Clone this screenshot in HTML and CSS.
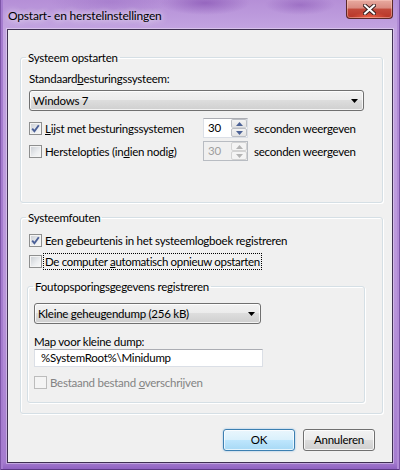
FILE: index.html
```html
<!DOCTYPE html>
<html>
<head>
<meta charset="utf-8">
<link rel="stylesheet" href="styles.css">
</head>
<body>
<div class="window">
  <div class="titlebar">
    <span class="title">Opstart- en herstelinstellingen</span>
    <div class="close">
      <svg width="13" height="11" viewBox="0 0 13 11"><path d="M2 1.5 L11 9.5 M11 1.5 L2 9.5" stroke="#3b2020" stroke-width="4" stroke-linecap="square"/><path d="M2 1.5 L11 9.5 M11 1.5 L2 9.5" stroke="#fff" stroke-width="2" stroke-linecap="square"/></svg>
    </div>
  </div>
  <div class="client">
    <fieldset class="group g1">
      <legend>Systeem opstarten</legend>
      <div class="gbody g1body">
        <div class="label">Standaard<u>b</u>esturingssysteem:</div>
        <div class="combo combo-os"><span>Windows 7</span><svg width="7" height="4" viewBox="0 0 7 4"><path d="M0 0H7L3.5 4Z" fill="#000"/></svg></div>
        <div class="spinrow first">
          <div class="check"><span class="box checked"><svg width="11" height="11" viewBox="0 0 11 11"><path d="M2.2 5.6 L4.4 8.2 L8.8 2.2" fill="none" stroke="#4a5f97" stroke-width="1.9"/></svg></span><span class="txt"><u>L</u>ijst met besturingssystemen</span></div>
          <div class="spin"><span class="val">30</span><span class="btns"><span class="up"><svg width="7" height="4" viewBox="0 0 7 4"><path d="M0 4L3.5 0L7 4Z" fill="#4c6296"/></svg></span><span class="dn"><svg width="7" height="4" viewBox="0 0 7 4"><path d="M0 0H7L3.5 4Z" fill="#4c6296"/></svg></span></span></div>
          <span class="unit">seconden weergeven</span>
        </div>
        <div class="spinrow second">
          <div class="check"><span class="box"></span><span class="txt">Herstelopties (in<u>d</u>ien nodig)</span></div>
          <div class="spin disabled"><span class="val">30</span><span class="btns"><span class="up"><svg width="7" height="4" viewBox="0 0 7 4"><path d="M0 4L3.5 0L7 4Z" fill="#b4b4b4"/></svg></span><span class="dn"><svg width="7" height="4" viewBox="0 0 7 4"><path d="M0 0H7L3.5 4Z" fill="#b4b4b4"/></svg></span></span></div>
          <span class="unit">seconden weergeven</span>
        </div>
      </div>
    </fieldset>

    <fieldset class="group g2">
      <legend>Systeemfouten</legend>
      <div class="gbody g2body">
        <div class="check"><span class="box checked"><svg width="11" height="11" viewBox="0 0 11 11"><path d="M2.2 5.6 L4.4 8.2 L8.8 2.2" fill="none" stroke="#4a5f97" stroke-width="1.9"/></svg></span><span class="txt">Een <u>g</u>ebeurtenis in het systeemlogboek registreren</span></div>
        <div class="check second-check"><span class="box"></span><span class="txt focus">De computer <u>a</u>utomatisch opnieuw opstarten</span></div>
        <fieldset class="group inner">
          <legend>Foutopsporingsgegevens registreren</legend>
          <div class="gbody innerbody">
            <div class="combo combo-dump"><span>Kleine geheugendump (256 kB)</span><svg width="7" height="4" viewBox="0 0 7 4"><path d="M0 0H7L3.5 4Z" fill="#000"/></svg></div>
            <div class="label maplabel">Map voor kleine dump:</div>
            <div class="textbox">%SystemRoot%\Minidump</div>
            <div class="check disabled overwrite"><span class="box"></span><span class="txt">Bestaand bestand <u>o</u>verschrijven</span></div>
          </div>
        </fieldset>
      </div>
    </fieldset>

    <div class="buttons">
      <div class="btn default">OK</div>
      <div class="btn">Annuleren</div>
    </div>
  </div>
</div>
</body>
</html>
```
FILE: styles.css
```css
* { box-sizing: border-box; }
html, body { margin: 0; padding: 0; }
body {
  font-family: Lato, "Liberation Sans", sans-serif;
  font-size: 11.5px;
  letter-spacing: -0.25px;
  color: #000;
  line-height: 15px;
}
u { text-decoration: underline; text-underline-offset: 1px; }

.window {
  width: 400px;
  height: 470px;
  display: flex;
  flex-direction: column;
  background:
    radial-gradient(ellipse 45px 12px at 205px 3px, rgba(110, 50, 160, .45), transparent),
    radial-gradient(ellipse 35px 10px at 300px 5px, rgba(110, 50, 160, .35), transparent),
    radial-gradient(ellipse 60px 14px at 110px 2px, rgba(130, 80, 180, .25), transparent),
    linear-gradient(#b58fd7 0, #c3a4e1 30px, #b995da 300px, #a57ccf 462px, #8c5ebf 470px);
  box-shadow: inset 1px 0 0 #7d55a8, inset -1px 0 0 #7d55a8, inset 0 -1px 0 #5d3a85, inset 3px 0 0 #a57ccf, inset -3px 0 0 #b18bd6;
}

.titlebar {
  height: 29px;
  display: flex;
  justify-content: space-between;
  align-items: flex-start;
  padding-left: 8px;
}
.title {
  margin-top: 8px;
  font-size: 12px;
  letter-spacing: -0.2px;
  text-shadow: 0 0 6px rgba(255, 255, 255, .9), 0 0 10px rgba(255, 255, 255, .6);
}
.close {
  width: 47px;
  height: 19px;
  margin-right: 7px;
  border: 1px solid #5a2828;
  border-top: none;
  border-radius: 0 0 4px 4px;
  background:
    radial-gradient(ellipse 18px 6px at 50% 100%, rgba(255, 110, 80, .8), transparent),
    linear-gradient(#e8aaa0 0, #d98a80 45%, #c24a3c 50%, #b83528 100%);
  box-shadow: inset 0 0 0 1px rgba(255, 210, 200, .45);
  display: flex;
  align-items: center;
  justify-content: center;
}
.close svg { display: block; margin-top: 1px; }

.client {
  margin: 0 7px 7px;
  height: 434px;
  border: 1px solid #3f3052;
  background: #f0f0f0;
  padding-top: 20px;
  display: flex;
  flex-direction: column;
  box-shadow: 0 0 0 1px rgba(255, 255, 255, .35);
}

.group {
  margin: 0;
  padding: 0;
  min-width: 0;
  border: 1px solid #d5dfe5;
  border-radius: 3px;
  box-shadow: inset 1px 1px 0 #fff, 1px 1px 0 #fff;
}
.group legend {
  padding: 0 2px;
  margin-left: 5px;
  line-height: 15px;
}
.g1 { margin-left: 12px; width: 363px; }
.g2 { margin-left: 12px; width: 363px; margin-top: 7px; }

.gbody { padding-left: 8px; }
.g1body { padding-top: 6px; padding-bottom: 41px; }
.g2body { padding-top: 7px; padding-bottom: 10px; }

.label { height: 15px; white-space: nowrap; }

.combo {
  height: 21px;
  border: 1px solid #707070;
  border-radius: 3px;
  background: linear-gradient(#f2f2f2 0, #ebebeb 50%, #dddddd 50%, #cfcfcf 100%);
  box-shadow: inset 0 0 0 1px rgba(255, 255, 255, .75);
  display: flex;
  align-items: center;
  justify-content: space-between;
  padding: 0 5px 0 3px;
}
.combo svg { display: block; margin-top: 1px; }
.combo-os { width: 335px; margin-top: 4px; }
.combo-dump { width: 227px; }

.check {
  display: flex;
  align-items: center;
  gap: 1px;
  height: 17px;
  white-space: nowrap;
}
.box {
  width: 13px;
  height: 13px;
  flex: none;
  border: 1px solid #8e8f8f;
  background: linear-gradient(135deg, #c8ccd2 0%, #eceef0 60%, #f8f8f8 100%);
  box-shadow: inset 0 0 0 1px #f4f4f4;
  display: flex;
  align-items: center;
  justify-content: center;
}
.box svg { display: block; }
.txt {
  padding: 0 1px;
  border: 1px dotted transparent;
  line-height: 15px;
}
.txt.focus { border-color: #000; letter-spacing: -0.33px; }

.check.disabled .box {
  border-color: #bcbcbc;
  background: #f4f4f4;
  box-shadow: none;
}
.check.disabled .txt { color: #838383; }

.spinrow {
  display: grid;
  grid-template-columns: 168px 45px auto;
  column-gap: 6px;
  align-items: center;
  height: 20px;
}
.spinrow.first { margin-top: 7px; }
.spinrow.second { margin-top: 3px; }

.spin {
  width: 45px;
  height: 20px;
  border: 1px solid #dbdfe6;
  border-top-color: #abadb3;
  background: #fff;
  display: flex;
  align-items: stretch;
  justify-content: space-between;
}
.spin .val { padding-left: 4px; line-height: 18px; }
.spin .btns {
  width: 16px;
  display: flex;
  flex-direction: column;
}
.spin .up, .spin .dn {
  flex: 1;
  border: 1px solid #bbbec4;
  border-radius: 2px;
  background: linear-gradient(#f3f3f3, #e3e3e3);
  display: flex;
  align-items: center;
  justify-content: center;
}
.spin .up { border-bottom-color: #d0d2d6; }
.spin svg { display: block; }
.spin.disabled { background: #f0f0f0; border-color: #b8bcc2; }
.spin.disabled .val { color: #9e9e9e; }
.spin.disabled .up, .spin.disabled .dn { background: #f4f4f4; border-color: #d3d3d3; }

.second-check { margin-top: 4px; }

.inner {
  margin-left: -2px;
  margin-top: 9px;
  width: 338px;
}
.innerbody { padding-left: 6px; padding-top: 9px; padding-bottom: 11px; }
.maplabel { margin-top: 10px; }
.textbox {
  width: 229px;
  height: 18px;
  border: 1px solid #dbdfe6;
  border-top-color: #abadb3;
  background: #fff;
  padding-left: 6px;
  line-height: 16px;
  white-space: nowrap;
}
.overwrite { margin-top: 7px; }

.buttons {
  display: flex;
  justify-content: flex-end;
  gap: 8px;
  padding-right: 17px;
  margin-top: 15px;
}
.btn {
  width: 72px;
  height: 22px;
  border: 1px solid #707070;
  border-radius: 3px;
  background: linear-gradient(#f2f2f2 0, #ebebeb 50%, #dddddd 50%, #cfcfcf 100%);
  box-shadow: inset 0 0 0 1px rgba(255, 255, 255, .8);
  text-align: center;
  line-height: 20px;
}
.btn.default {
  border-color: #3c7fb1;
  background: linear-gradient(#eaf6fd 0, #d9f0fc 50%, #bee6fd 50%, #a7d9f5 100%);
  box-shadow: inset 0 0 0 1px rgba(255, 255, 255, .7), 0 0 2px rgba(60, 150, 220, .6);
}
```
